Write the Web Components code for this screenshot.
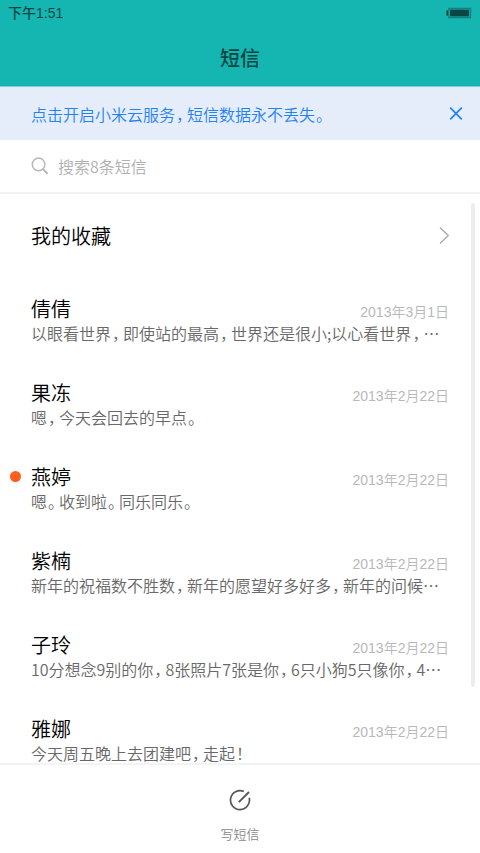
<!DOCTYPE html>
<html lang="zh-CN">
<head>
<meta charset="utf-8">
<meta name="viewport" content="width=device-width, initial-scale=1">
<title>短信</title>
<style>
html, body { margin: 0; height: 100%; }
body { background: #fff; color: #111; font-family: "Noto Sans CJK SC", "Noto Sans", sans-serif; }
</style>
</head>
<body>
<sms-app></sms-app>

<template id="sms-app">
<style>
:host { display: flex; flex-direction: column; height: 100vh; overflow: hidden; }
main { flex: 1; min-height: 0; position: relative; overflow: hidden; }
ul { list-style: none; margin: 0; padding: 0; }
.thumb { position: absolute; right: 5px; top: 9px; width: 4px; height: 85%; border-radius: 2px; background: #ececec; }
</style>
<title-bar time="下午1:51">短信</title-bar>
<cloud-banner>点击开启小米云服务，短信数据永不丢失。</cloud-banner>
<search-bar hint="搜索8条短信"></search-bar>
<main>
  <favorites-row>我的收藏</favorites-row>
  <ul>
    <li><message-row name="倩倩" date="2013年3月1日">以眼看世界，即使站的最高，世界还是很小;以心看世界，…</message-row></li>
    <li><message-row name="果冻" date="2013年2月22日">嗯，今天会回去的早点。</message-row></li>
    <li><message-row name="燕婷" date="2013年2月22日" unread>嗯。收到啦。同乐同乐。</message-row></li>
    <li><message-row name="紫楠" date="2013年2月22日">新年的祝福数不胜数，新年的愿望好多好多，新年的问候…</message-row></li>
    <li><message-row name="子玲" date="2013年2月22日">10分想念9别的你，8张照片7张是你，6只小狗5只像你，4…</message-row></li>
    <li><message-row name="雅娜" date="2013年2月22日">今天周五晚上去团建吧，走起！</message-row></li>
  </ul>
  <div class="thumb"></div>
</main>
<compose-bar>写短信</compose-bar>
</template>

<template id="title-bar">
<style>
:host { display: block; background: #15b5b1; color: #0b4644; border-bottom: 1px solid #7fd0d2; }
.status { display: flex; align-items: center; justify-content: space-between; height: 26px; padding: 0 8px; font: 500 14px/26px "Liberation Sans", "Noto Sans CJK SC", sans-serif; }
h1 { margin: 0; padding-top: 4px; font-size: 20px; font-weight: 500; line-height: 56px; text-align: center; }
svg { display: block; }
</style>
<div class="status"><span class="time"></span>
<svg width="26" height="12" viewBox="0 0 26 12" aria-hidden="true"><path d="M2 .8h23.2v10.4H2V8.5H.5v-5H2z" fill="#15807d"/><path d="M3 2h21v8H3z" fill="#15a09c"/><path d="M4 2.7h19v6.6H4z" fill="#0b4644"/><path d="M.5 3.5H2v5H.5z" fill="#0b4644"/></svg></div>
<h1><slot></slot></h1>
</template>

<template id="cloud-banner">
<style>
:host { display: flex; align-items: center; justify-content: space-between; height: 53px; padding: 0 16px 0 31px; background: #e6edfa; color: #1f82f5; font-size: 16px; line-height: 22px; font-weight: 350; }
a { color: inherit; text-decoration: none; }
button { border: 0; padding: 0; background: none; color: inherit; width: 16px; height: 16px; }
svg { display: block; }
</style>
<a href="#cloud"><cjk-text></cjk-text></a>
<button type="button" aria-label="关闭"><svg width="16" height="16" viewBox="0 0 16 16" fill="none" stroke="currentColor" stroke-width="1.7"><path d="M2.2 1.7l11.6 11.6M13.8 1.7L2.2 13.3"/></svg></button>
</template>

<template id="search-bar">
<style>
:host { display: block; border-bottom: 2px solid #f3f3f3; }
label { display: flex; align-items: center; gap: 9px; height: 52px; padding: 0 31px; }
svg { flex: none; }
input { flex: 1; min-width: 0; border: 0; outline: 0; padding: 0; background: none; font: 350 16px/24px "Noto Sans CJK SC", sans-serif; color: #222; }
input::placeholder { color: #b0b0b0; opacity: 1; }
</style>
<label><svg width="18" height="18" viewBox="0 0 18 18" fill="none" stroke="#b8b8b8" stroke-width="1.5" aria-hidden="true"><circle cx="7.6" cy="7.4" r="6.3"/><path d="M12 12l4.6 4.8" stroke-width="1.9"/></svg><input type="search" aria-label="搜索短信"></label>
</template>

<template id="favorites-row">
<style>
:host { display: block; }
a { display: flex; align-items: center; justify-content: space-between; height: 84px; padding: 0 30px 0 31px; color: #000; text-decoration: none; font-size: 20px; font-weight: 350; line-height: 26px; }
</style>
<a href="#favorites"><span><slot></slot></span>
<svg width="11" height="18" viewBox="0 0 11 18" fill="none" stroke="#a8a8a8" stroke-width="1.3" aria-hidden="true"><path d="M1 .5l8.3 8L1 16.5"/></svg></a>
</template>

<template id="message-row">
<style>
:host { display: block; position: relative; padding: 18px 31px; }
:host([unread])::before { content: ""; position: absolute; left: 10px; top: 25px; width: 11px; height: 11px; border-radius: 50%; background: #ff5d1c; }
.head { display: flex; align-items: baseline; justify-content: space-between; height: 26px; }
h2 { margin: 0; font-size: 20px; font-weight: 350; line-height: 26px; color: #000; }
time { font: 350 14px/26px "Liberation Sans", "Noto Sans CJK SC", sans-serif; color: #b8b8b8; }
p { margin: 0; font-size: 16px; font-weight: 350; line-height: 22px; color: #686868; white-space: nowrap; overflow: hidden; }
</style>
<div class="head"><h2></h2><time></time></div>
<p><cjk-text></cjk-text></p>
</template>

<template id="compose-bar">
<style>
:host { display: block; border-top: 2px solid #f3f3f3; background: #fff; }
button { display: flex; flex-direction: column; align-items: center; gap: 13px; width: 100%; height: 88px; padding: 24px 0 0; border: 0; background: none; font: 350 13px/20px "Noto Sans CJK SC", sans-serif; color: #888; }
svg { display: block; flex: none; }
</style>
<button type="button"><svg width="22" height="22" viewBox="0 0 22 22" fill="none" stroke="#555" stroke-width="1.7" aria-hidden="true"><path d="M14.8 2.4A9.5 9.5 0 1 0 20.2 8.8"/><path d="M9.8 13.2L20 3" stroke-width="1.9"/></svg><span><slot></slot></span></button>
</template>

<script>
class Base extends HTMLElement {
  constructor() {
    super();
    this.attachShadow({ mode: 'open' });
    const t = document.getElementById(this.localName);
    if (t) this.shadowRoot.append(t.content.cloneNode(true));
  }
  $(s) { return this.shadowRoot.querySelector(s); }
}

// Sets full-width punctuation in its half-width form with a little space around it.
customElements.define('cjk-text', class extends Base {
  set value(text) {
    this.shadowRoot.innerHTML = '<style>:host{display:inline}span{font-feature-settings:"halt";padding:0 3px 0 1px}</style>';
    for (const part of text.split(/([，。！])/)) {
      if (!part) continue;
      if (/[，。！]/.test(part)) {
        const s = document.createElement('span');
        s.textContent = part;
        this.shadowRoot.append(s);
      } else this.shadowRoot.append(part);
    }
  }
});
customElements.define('title-bar', class extends Base {
  connectedCallback() { this.$('.time').textContent = this.getAttribute('time'); }
});
customElements.define('cloud-banner', class extends Base {
  connectedCallback() { this.$('cjk-text').value = this.textContent.trim(); }
});
customElements.define('search-bar', class extends Base {
  connectedCallback() { this.$('input').placeholder = this.getAttribute('hint'); }
});
customElements.define('favorites-row', class extends Base {});
customElements.define('message-row', class extends Base {
  connectedCallback() {
    this.$('h2').textContent = this.getAttribute('name');
    this.$('time').textContent = this.getAttribute('date');
    this.$('cjk-text').value = this.textContent.trim();
  }
});
customElements.define('compose-bar', class extends Base {});
customElements.define('sms-app', class extends Base {});
</script>
</body>
</html>
